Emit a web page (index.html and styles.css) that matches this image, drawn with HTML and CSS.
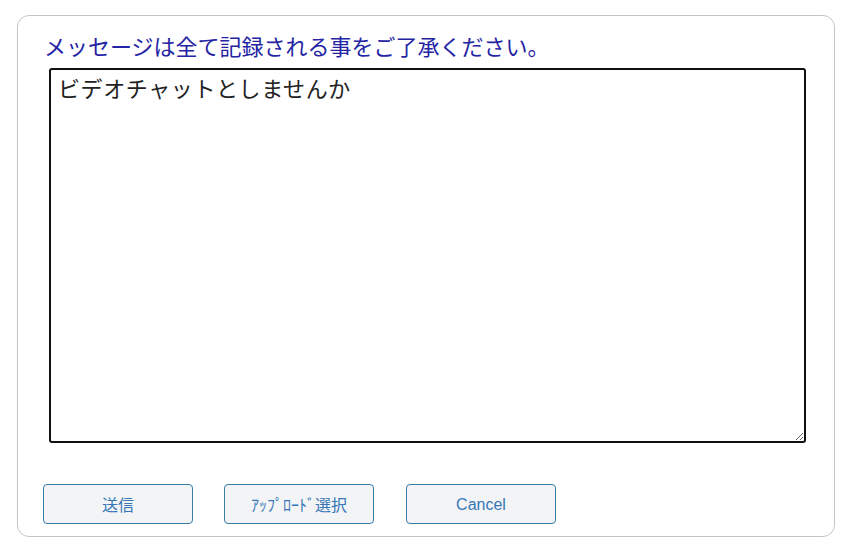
FILE: index.html
```html
<!DOCTYPE html>
<html lang="ja">
<head>
    <meta charset="UTF-8">
    <title>メッセージ</title>
    <link rel="stylesheet" href="styles.css">
</head>
<body>
    <div class="panel">
        <p class="notice">メッセージは全て記録される事をご了承ください。</p>
        <textarea class="message" name="message">ビデオチャットとしませんか</textarea>
        <div class="actions">
            <button type="button" class="btn">送信</button>
            <button type="button" class="btn">ｱｯﾌﾟﾛｰﾄﾞ選択</button>
            <button type="button" class="btn btn-latin">Cancel</button>
        </div>
    </div>
</body>
</html>
```

FILE: styles.css
```css
/* message form */
body {
    margin: 0;
    padding: 15px 9px 6px 17px;
    background-color: #fff;
    font-family: "Noto Sans CJK JP", sans-serif;
}

.panel {
    height: 522px;
    box-sizing: border-box;
    border: 1px solid #c4c4c4;
    border-radius: 12px;
    padding: 14px 0 0 25px;
}

.notice {
    margin: 0 0 0 1px;
    color: #2424a4;
    font-size: 22px;
    line-height: 30px;
}

.message {
    display: block;
    width: 757px;
    height: 375px;
    margin: 8px 0 0 6px;
    padding: 2px 7px;
    box-sizing: border-box;
    border: 2px solid #111;
    border-radius: 3px;
    font-family: "Noto Sans CJK JP", sans-serif;
    font-size: 22px;
    letter-spacing: 0.6px;
    line-height: 30px;
    color: #222;
    outline: none;
}

.actions {
    display: flex;
    gap: 31px;
    margin-top: 41px;
}

.btn {
    width: 150px;
    height: 40px;
    background-color: #f3f4f6;
    border: 1px solid #3a7ca8;
    border-radius: 4px;
    color: #3676b6;
    font-family: "Noto Sans CJK JP", sans-serif;
    font-size: 16px;
    cursor: pointer;
}

.btn-latin {
    margin-left: 1px;
    padding-top: 3px;
    font-family: "Liberation Sans", Arial, sans-serif;
}
```
